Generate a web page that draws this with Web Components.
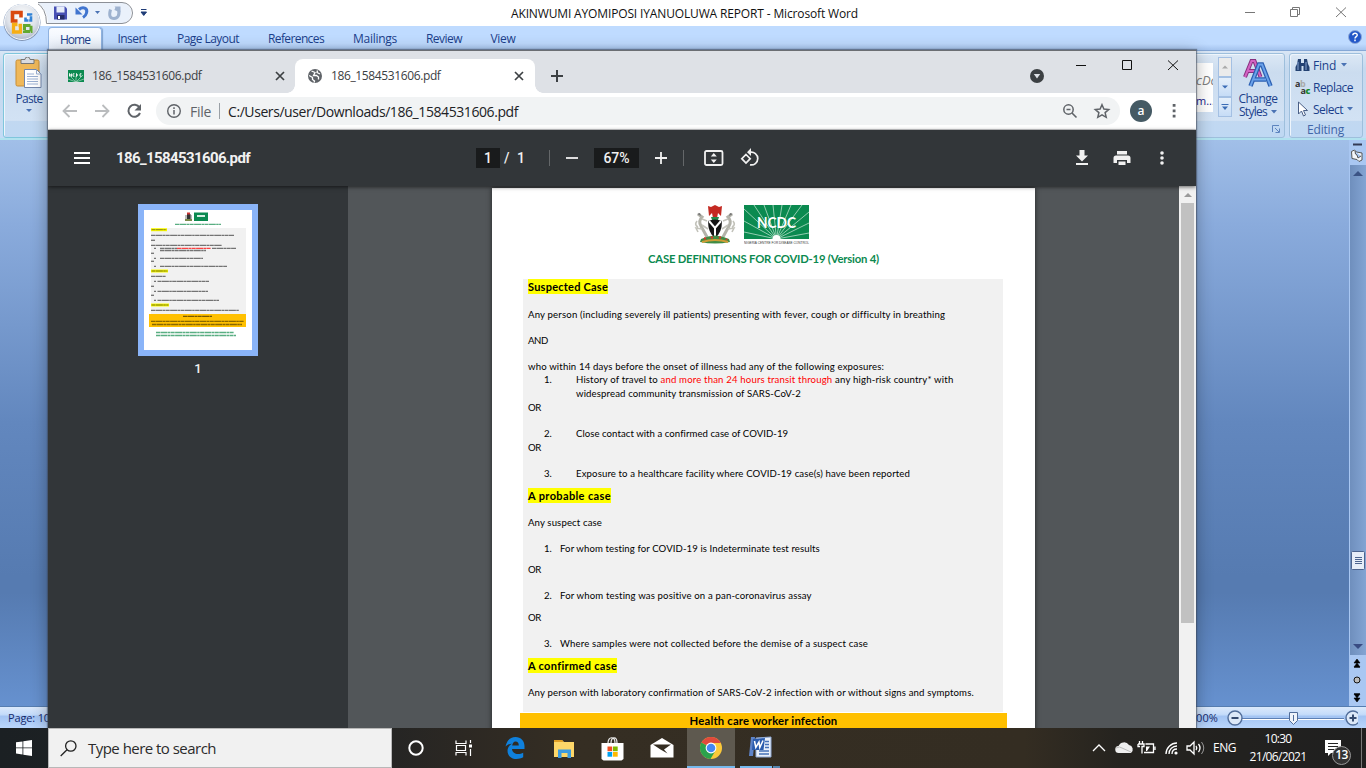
<!DOCTYPE html>
<html lang="en">
<head>
<meta charset="utf-8">
<title>Desktop</title>
<style>
html,body{margin:0;height:100%;overflow:hidden}
body{font-family:"Open Sans","Noto Sans",sans-serif}
desk-top{height:768px;width:1366px}
</style>
</head>
<body>
<desk-top></desk-top>
<script>
const svg=(w,h,body,vb)=>`<svg width="${w}" height="${h}" viewBox="${vb||`0 0 ${w} ${h}`}" style="display:block;flex:none">${body}</svg>`;
const fit=(w,text,cls='')=>`<fit-text w="${w}" class="${cls}">${text}</fit-text>`;
const define=(name,css,html)=>customElements.define(name,class extends HTMLElement{
  constructor(){super();this.attachShadow({mode:'open'}).innerHTML=`<style>*{box-sizing:border-box}${css}</style>${html}`;}
});

/* ---------- Office 2007 pieces ---------- */
define('office-button',`:host{display:block;width:40px;height:40px}`,
svg(40,40,`<defs><radialGradient id="g" cx=".5" cy=".35" r=".7"><stop offset="0" stop-color="#fff"/><stop offset=".6" stop-color="#dfe3ea"/><stop offset="1" stop-color="#a6b1c4"/></radialGradient></defs>
<circle cx="20" cy="20.500" r="18.500" fill="#7f93b3"/><circle cx="20" cy="20" r="17.500" fill="url(#g)" stroke="#f6f9fd"/>
<g fill="none"><path d="M15.500 19H10.500V10.500h8.500v5" stroke="#d9480f" stroke-width="3.600"/><path d="M23.500 15.500v3h5.500v-6h-4" stroke="#3283d6" stroke-width="2.600" stroke-dasharray="6 .7"/><path d="M15.500 22.500h-4v7.500h7v-6.500h-2" stroke="#f7ae14" stroke-width="3.300"/><path d="M22.500 23.500h6.500v6h-6.500z" stroke="#62a92f" stroke-width="3" stroke-dasharray="6 .7"/></g>`));

define('quick-access',`:host{display:flex;align-items:center}`,
svg(120,26,`<path d="M0 2.500h83a10 10 0 0 1 0 21H10q0-13-10-21z" fill="#eaf1fb"/><path d="M-2 2.500h86a10.500 10.500 0 0 1 0 21H8.500Q8.500 8-2 2.500" fill="none" stroke="#8c9097"/>
<path d="M16 6.500h11l2 2v11H16z" fill="#4750b4"/><path d="M18.500 6.500h8v6h-8z" fill="#e6ecfa"/><path d="M19 15h7.500v4.500H19z" fill="#252c68"/><path d="M20 16h2v3h-2z" fill="#fff"/>
<path d="M41 9.500c4-3.500 9-1.500 7.500 3.500-.5 2-2 3.500-3.500 4.500" fill="none" stroke="#4175cf" stroke-width="3"/><path d="M37.500 7.500v7h7z" fill="#4175cf"/>
<path d="M57 11h5l-2.500 3z" fill="#4b73b4"/>
<path d="M72.500 9.500c-2 7 0 9 3.500 9s6-3 4.500-8.500l-3.500-1.500" fill="none" stroke="#9eb2cf" stroke-width="3"/><path d="M76.500 6.500h6v6z" fill="#9eb2cf"/>
<path d="M103 9.500h5.500M103 12h5.500l-2.750 3.500z" fill="#1f3c77" stroke="#1f3c77"/>`));

define('ribbon-tab',`:host{display:flex;align-items:center;justify-content:center;height:24px;padding-top:1px;box-sizing:border-box;font-size:12px;color:#1b3f8b}:host([active]){height:23px;background:linear-gradient(#fafcff,#e9f1fb);border:1px solid #8fb2e0;border-bottom:0;border-radius:4px 4px 0 0;margin-top:1px;padding-top:0;box-shadow:1px 0 1px #7fa2d0}`,`<slot></slot>`);

define('word-titlebar',`:host{display:flex;height:26px;background:#fff}.qa{margin-left:38px;width:120px}.t{margin-left:353px;margin-top:6px;font-size:12px;line-height:16px;color:#111;white-space:nowrap}.c{margin-left:386px}`,
`<quick-access class="qa"></quick-access><div class="t">${fit(347,'AKINWUMI AYOMIPOSI IYANUOLUWA REPORT - Microsoft Word')}</div><div class="c">${svg(112,26,`<g fill="none" stroke="#777"><path d="M1 12.500h10M46.500 9.500h7v7h-7zM48.500 9.500v-2h7v7h-2M92 7.500l10 9.500M102 7.500l-10 9.500"/></g>`)}</div>`);

define('ribbon-tabs',`:host{display:flex;height:24px;background:linear-gradient(#bfdbff,#bfdbff 75%,#a5c4ee);padding-left:48px}
.h{width:54px}.e{margin-left:auto;margin-top:4px;margin-right:4px}`,
`<ribbon-tab active class="h">${fit(30,'Home')}</ribbon-tab>
<ribbon-tab style="width:60px">${fit(29,'Insert')}</ribbon-tab><ribbon-tab style="width:92px">${fit(62,'Page Layout')}</ribbon-tab><ribbon-tab style="width:84px">${fit(56,'References')}</ribbon-tab><ribbon-tab style="width:74px">${fit(44,'Mailings')}</ribbon-tab><ribbon-tab style="width:64px">${fit(36,'Review')}</ribbon-tab><ribbon-tab style="width:54px">${fit(25,'View')}</ribbon-tab>
<div class="e">${svg(14,14,`<circle cx="7" cy="7" r="6.500" fill="#2257c8" stroke="#8fa9d8"/><path d="M4.800 5.300C5 2.500 9.500 2.700 9.200 5.200 9 6.600 7 6.600 7 8.400M7 9.600v1.600" stroke="#fff" stroke-width="1.500" fill="none"/>`)}</div>`);

define('word-ribbon',`:host{display:flex;height:90px;background:linear-gradient(#d9e6f5,#c5d9ef 20%,#c6dbf2 80%,#c3dbf6);border-top:1px solid #86a8d6;border-bottom:2px solid #b1e2ef;color:#1b3f8b;font-size:12px;padding:2px 1px}
.g{flex:none;border:1px solid #9ebfdc;border-radius:3px;background:linear-gradient(#dce8f5,#cbdcef 22%,#d2e2f4 80%,#c1d8f1 81%,#bfd8f3);height:85px;box-shadow:inset 1px 1px #eef5fc}
.clip{width:120px;padding:3px 0 0 7px;margin-left:2px;border-color:#7fc6dc}.clip .p{display:flex;flex-direction:column;align-items:center;width:36px}
.st{margin-left:974px;width:188px;display:flex;padding-left:98px;position:relative}
.gal{width:17px;height:49px;margin-top:9px;background:#fff;overflow:hidden}
.col{display:flex;flex-direction:column;margin:3px 0 0 5px;width:14px}.col div{height:20px;border:1px solid #a4c0e3;background:linear-gradient(#e5effa,#c6dcf6);display:flex;align-items:center;justify-content:center}.col div:first-child{background:#ebebeb}
.cs{display:flex;flex-direction:column;align-items:center;width:40px;margin-left:6px;padding-top:4px;line-height:13px}
.r{display:flex;align-items:center;gap:4px}
.ed{width:74px;margin-left:4px;padding:0 0 0 5px}.ed .row{height:22px;display:flex;align-items:center;gap:3px}.ed .lab{height:18px;display:flex;align-items:center;justify-content:center;color:#4166a8;padding-right:6px}
.gt{font:italic 13px/18px "Open Sans",sans-serif;color:#7f7f7f;padding-top:8px;white-space:nowrap}.gb{font-size:11px;line-height:15px;color:#1a1a8c;padding-top:4px;white-space:nowrap}
.ab{width:15px;font:bold 9px/7px 'Open Sans',sans-serif;letter-spacing:-.4px;color:#333}.ab div{text-align:right}.ab i{font-style:normal;color:#aaa}.ab b{color:#168a2b}`,
`<div class="g clip"><div class="p">${svg(28,33,`<rect x="1" y="3" width="23" height="26" rx="1.500" fill="#efb85a" stroke="#c78d35"/><path d="M6 2.500h4a2.500 2.500 0 0 1 5 0h4v4H6z" fill="#d9dbe0" stroke="#777"/><path d="M9.500 12.500h12l4.500 4.500v13.500H9.500z" fill="#fff" stroke="#7286ab"/><path d="M21.500 12.500V17H26M12 17h7M12 19.500h11M12 22h11M12 24.500h11M12 27h11" fill="none" stroke="#9bb0d2"/>`)}<div style="line-height:17px">${fit(27,'Paste')}</div>${svg(6,6,`<path d="M0 2h6l-3 3z" fill="#4b73b4"/>`)}</div></div>
<div class="g st"><div class="gal"><div class="gt">cDc</div><div class="gb">m...</div></div>
<div class="col"><div>${svg(6,4,`<path d="M0 3.500h6L3 .5z" fill="#aaa"/>`)}</div><div>${svg(6,4,`<path d="M0 .5h6L3 3.500z" fill="#3b6cb5"/>`)}</div><div>${svg(8,8,`<path d="M.5 1.500h7" stroke="#3b6cb5"/><path d="M1 3.500h6L4 7z" fill="#3b6cb5"/>`)}</div></div>
<div class="cs">${svg(30,30,`<g fill="none"><path d="M2 19L8.500 3h3l6 16M5 13h9" stroke="#87307f" stroke-width="4"/><path d="M2 19L8.500 3h3l6 16M5 13h9" stroke="#d263c3" stroke-width="2"/><path d="M7.500 28L16 6.500h3L27.500 28M11 21.500h12" stroke="#2d60b2" stroke-width="4.500"/><path d="M7.500 28L16 6.500h3L27.500 28M11 21.500h12" stroke="#6aa2ea" stroke-width="2"/></g>`)}<div style="margin-top:4px;height:13px">${fit(39,'Change')}</div><div class="r">${fit(28,'Styles')}${svg(6,4,`<path d="M0 0h6L3 3.500z" fill="#4b73b4"/>`)}</div></div>
<div style="position:absolute;right:4px;bottom:4px">${svg(8,8,`<path d="M.5 7V.5H7M3 3l4 4M7.500 3.500v4h-4" fill="none" stroke="#5d84bf"/>`)}</div></div>
<div class="g ed"><div class="row">${svg(15,14,`<path d="M3 1h3v4h3V1h3l1 5 1.500 3v4h-6V8H6.500v5h-6V9L2 6z" fill="#244272"/><path d="M3 4v8M11 4v8" stroke="#89a5d2"/>`)}${fit(23,'Find')}${svg(8,4,`<path d="M2 0h6L5 3.500z" fill="#4b73b4"/>`)}</div>
<div class="row"><div class="ab">a<i>b</i><div>a<b>c</b></div></div>${fit(40,'Replace')}</div>
<div class="row">${svg(15,16,`<path d="M3.500 1v12l3-3 2 5 2-1-2-4.500h4z" fill="#fff" stroke="#4a5f86"/>`)}${fit(30,'Select')}${svg(7,4,`<path d="M1 0h6L4 3.500z" fill="#4b73b4"/>`)}</div>
<div class="lab">${fit(37,'Editing')}</div></div>`);

define('word-body',`:host{display:flex;justify-content:flex-end;height:566px;background:linear-gradient(#a1bfe8,#8aabdc 15%,#6287be 50%,#567bb1 77%,#567bb1 80%,#6691cf)}
.s{width:17px;background:#a9c7f2;display:flex;flex-direction:column;align-items:center}.tr{background:linear-gradient(90deg,#6f8fbd,#83a4d3);width:16px;height:490px;display:flex;flex-direction:column;align-items:center;padding:6px 0}`,
`<div class="s">${svg(17,25,`<path d="M4 4.500h9" stroke="#333a55" stroke-width="2"/><path d="M2.500 11.500l3-1.500 2 2 5.500 1v7l-3 1.500-2-2-5-1z M6 11q0 4 2 4l1 3 3-2" fill="#f4f6fa" stroke="#555"/>`)}<div class="tr">${svg(10,6,`<path d="M0 5h10L5 0z" fill="#3b5384"/>`)}<div style="margin-top:374px">${svg(14,19,`<rect x=".5" y=".5" width="13" height="18" rx="1" fill="#e6edf8" stroke="#4c648f"/><path d="M4 6.500h7M4 8.500h7M4 10.500h7M4 12.500h7" stroke="#4c648f"/>`)}</div><div style="margin-top:auto">${svg(10,6,`<path d="M0 1h10L5 6z" fill="#394c83"/>`)}</div></div>
${svg(17,51,`<path d="M5 8h6L8 4zM5 12h6L8 8zM5 12.500h6M5 39h6l-3 4zM5 43h6l-3 4zM5 38.500h6" fill="#000" stroke="#000" stroke-width=".6"/><circle cx="8" cy="25" r="3" fill="#bbb" stroke="#111"/>`)}</div>`);

define('word-status',`:host{display:flex;height:22px;box-sizing:border-box;background:linear-gradient(#dbe9fb,#c5dcfa 35%,#a3c4f3 45%,#b9d5fb);border-top:1px solid #567db0;font-size:11px;color:#15296b;align-items:center;padding-left:8px}`,
`${fit(42,'Page: 10')}<div style="margin-left:1146px">${fit(22,'00%')}</div>${svg(140,20,`<path d="M24 10.500h102" stroke="#5c7fb4"/><path d="M24 11.500h102" stroke="#fff"/><g fill="#dce8f8" stroke="#516d9a" stroke-width="1.400"><circle cx="17" cy="10" r="7"/><circle cx="135" cy="10" r="7"/></g><path d="M13.500 10h7M131.500 10h7M135 6.500v7" stroke="#34496e" stroke-width="2"/><path d="M71.500 4.500h8v8l-4 4-4-4z" fill="#eef3fa" stroke="#516d9a"/><path d="M75.500 7v6" stroke="#516d9a"/>`)}`);

define('word-window',`:host{display:flex;flex-direction:column;width:1366px;height:728px;position:relative}office-button{position:absolute;left:2px;top:2px}`,
`<word-titlebar></word-titlebar><ribbon-tabs></ribbon-tabs><word-ribbon></word-ribbon><word-body></word-body><word-status></word-status><office-button></office-button>`);

/* ---------- browser ---------- */
const sunburst=`<path d="M0 0h65v34H0z" fill="#0b8a50"/><path d="M32.500 34L0 27M32.500 34L0 16M32.500 34L0 4M32.500 34L10 0M32.500 34L20 0M32.500 34L29 0M32.500 34L38 0M32.500 34L47 0M32.500 34L58 0M32.500 34L65 7M32.500 34L65 18M32.500 34L65 28" stroke="#b5ddc8" stroke-width=".8"/><circle cx="32.500" cy="34" r="4" fill="#fff"/>`;

define('browser-tab',`:host{display:flex;align-items:center;height:34px;width:240px;box-sizing:border-box;font-size:12px;color:#3c4043;padding:0 10px 0 12px;position:relative}:host([active]){background:#fff;border-radius:8px 8px 0 0}
:host([active])::before,:host([active])::after{content:"";position:absolute;bottom:0;width:8px;height:8px;left:-8px;background:radial-gradient(circle at 0 0,transparent 7.5px,#fff 8px)}:host([active])::after{left:auto;right:-8px;background:radial-gradient(circle at 100% 0,transparent 7.5px,#fff 8px)}
.x{margin-left:auto}.n{margin-left:8px;padding-bottom:1px}`,
`<slot name="icon"></slot><div class="n">${fit(109.5,'186_1584531606.pdf')}</div><div class="x">${svg(12,12,`<path d="M2 2l8 8M10 2l-8 8" stroke="#3c4043" stroke-width="1.700"/>`)}</div>`);

define('tab-strip',`:host{display:flex;height:43px;box-sizing:border-box;background:#dee1e6;border-top:1px solid #6b6e73;padding:8px 0 0 8px}`,
`<browser-tab><div slot="icon">${svg(16,12,`<path d="M0 0h16v12H0z" fill="#0b8a50"/><path d="M8 12L0 9M8 12L1 5M8 12l7-7M8 12l8-3M8 12V6" stroke="#a5d5bd" stroke-width=".7"/><path d="M1.500 6.500v-3l2 3v-3M6.500 3.800H5v2.400h1.500M8.500 3.500v3q2-1.500 0-3M13.500 3.800H12v2.400h1.500" fill="none" stroke="#fff" stroke-width=".9"/>`)}</div></browser-tab><browser-tab active style="margin-left:-1px"><div slot="icon">${svg(16,16,`<circle cx="8" cy="8" r="7" fill="#5f6368"/><path d="M2.200 7.500l3.300 2v2l2 1.500-.5 1.500M4.500 3L8 4.500 6.500 7.500h3l2 1.500v2.500M10.500 2.500l-.5 2 3 1.500" stroke="#fff" stroke-width="1.300" fill="none"/>`)}</div></browser-tab>
<div style="margin:11px 0 0 16px">${svg(12,12,`<path d="M6 0v12M0 6h12" stroke="#3c4043" stroke-width="2"/>`)}</div>
<div style="margin-left:466px">${svg(160,34,`<circle cx="8" cy="17" r="7" fill="#3c4043"/><path d="M4.800 15h6.400L8 19.500z" fill="#dee1e6"/><path d="M47 6.500h10M93.500 1.500h9v9h-9zM139 1.500l10 9.500M149 1.500l-10 9.500" fill="none" stroke="#111"/>`)}</div>`);

define('address-bar',`:host{display:flex;align-items:center;height:37px;box-sizing:border-box;background:#fff;border-bottom:1px solid #cfd0d2;padding-left:12px}
.o{display:flex;align-items:center;width:964px;height:28px;border-radius:14px;background:#f1f3f4;margin-left:12px;padding-left:10px;font-size:14px;color:#202124}.f{color:#5f6368;margin-left:8px}.l{width:1px;height:16px;background:#9aa0a6;margin:0 8px 0 8px}
.i{margin-left:auto;margin-right:9px;display:flex;gap:15px}.a{width:22px;height:22px;border-radius:50%;background:#455a64;color:#fff;font:600 12px/21px "Open Sans",sans-serif;text-align:center;margin:0 20px 0 10px}`,
`${svg(84,20,`<g fill="none" stroke-width="1.800"><path d="M17 10H4M9.500 4l-6 6 6 6M35 10h13M42.500 4l6 6-6 6" stroke="#babcbe"/><path d="M79.500 6.500A6 6 0 1 0 80 12" stroke="#5f6368" stroke-width="2"/></g><path d="M81 3v6.500h-6.500z" fill="#5f6368"/>`)}
<div class="o">${svg(16,16,`<circle cx="8" cy="8" r="6.300" fill="none" stroke="#5f6368" stroke-width="1.400"/><path d="M8 7v4.500M8 4.300V6" stroke="#5f6368" stroke-width="1.500"/>`)}<div class="f">${fit(21,'File')}</div><div class="l"></div>${fit(290,'C:/Users/user/Downloads/186_1584531606.pdf')}
<div class="i">${svg(16,16,`<circle cx="6.500" cy="6.500" r="4.700" fill="none" stroke="#5f6368" stroke-width="1.500"/><path d="M10 10l4.500 4.500M4.500 6.500h4" stroke="#5f6368" stroke-width="1.600"/>`)}${svg(18,16,`<path d="M9 1.700l1.900 4.400 4.800.4-3.600 3.100 1.100 4.700L9 11.800l-4.200 2.500 1.100-4.700-3.600-3.100 4.800-.4z" fill="none" stroke="#5f6368" stroke-width="1.500"/>`)}</div></div>
<div class="a">a</div>${svg(4,16,`<path d="M.7 1h2.800v2.800H.7zM.7 6.400h2.800v2.800H.7zM.7 11.800h2.800v2.800H.7z" fill="#5f6368"/>`)}`);

define('pdf-toolbar',`:host{display:flex;align-items:center;height:56px;box-sizing:border-box;background:#323639;color:#f1f1f1;font:500 14px Roboto,sans-serif;padding-left:26px;box-shadow:0 1px 4px rgba(0,0,0,.6);position:relative;z-index:1}
.b{background:#191b1c;height:20px;line-height:21px;text-align:center}.s{width:1px;height:16px;background:#646769}`,
`${svg(16,12,`<path d="M0 1h16M0 6h16M0 11h16" stroke="#fff" stroke-width="2"/>`)}<div style="margin-left:26px;font-weight:700;font-size:15px">${fit(134,'186_1584531606.pdf')}</div>
<div class="b" style="margin-left:226px;width:24px">1</div><div style="margin-left:4px;width:45px;word-spacing:4px">/ 1</div><div class="s"></div>
<div style="margin-left:16px">${svg(12,12,`<path d="M0 6h12" stroke="#f1f1f1" stroke-width="1.800"/>`)}</div><div class="b" style="margin-left:16px;width:45px">67%</div><div style="margin-left:16px">${svg(12,12,`<path d="M0 6h12M6 0v12" stroke="#f1f1f1" stroke-width="1.800"/>`)}</div><div class="s" style="margin-left:16px"></div>
<div style="margin-left:20px">${svg(20,16,`<rect x="1" y="1" width="17.500" height="14" rx="1.500" fill="none" stroke="#f1f1f1" stroke-width="1.800"/><path d="M6.800 6.500h6L9.800 3zM6.800 9.500h6l-3 3.500z" fill="#f1f1f1"/>`)}</div>
<div style="margin-left:16px">${svg(20,20,`<path d="M6 6.500l4.200 4.200L6 15l-4.200-4.300z M10 4.300A6.400 6.400 0 1 1 10 16.800" fill="none" stroke="#f1f1f1" stroke-width="1.700"/><path d="M11 0v8L7 4.200z" fill="#f1f1f1"/>`)}</div>
<div style="margin-left:311px">${svg(100,20,`<path d="M8.500 2h5v5.500H17L11 13.500 5 7.500h3.500zM5 15h12v2H5z" fill="#f1f1f1"/><path d="M46 3h10v3.500H46zM45 7.500h12a2.500 2.500 0 0 1 2.500 2.500v5H56v-3H46v3h-3.500v-5A2.500 2.500 0 0 1 45 7.500zM47.500 13.500h7V17h-7z" fill="#f1f1f1"/><g fill="#f1f1f1"><circle cx="91" cy="5" r="1.800"/><circle cx="91" cy="10" r="1.800"/><circle cx="91" cy="15" r="1.800"/></g>`)}</div>`);

const tl=(y,a,b,c='#444')=>`<path d="M${a} ${y}H${b}" stroke="${c}" stroke-width="1.300" stroke-dasharray="4 .4 7 .4 2.500 .4" opacity=".72"/>`;
const yl=(y,b)=>`<path d="M7 ${y-1.5}H${b}v3H7z" fill="#ff0"/>`+tl(y,7.5,b-.5,'#771');
define('page-thumb',`:host{display:flex;flex-direction:column;align-items:center;width:120px;color:#f1f1f1;font:500 13px Roboto,sans-serif}.p{border:6px solid #8ab4f8;background:#fff}.n{margin-top:5px;line-height:16px}`,
`<div class="p">${svg(108,140,`<path d="M7 18h95v86H7z" fill="#f1f1f1"/><path d="M5 104h97v13H5z" fill="#ffc000"/><path d="M41 5h2v5h-2zM46 5h2v5h-2z" fill="#bbb"/><path d="M43 4h3.500v5H43z" fill="#333"/><path d="M43 2.500h3v2h-3z" fill="#c33"/><path d="M41 9h7v2h-7z" fill="#7a8a4a"/><path d="M50 2.500h14v8.500H50z" fill="#0b8a50"/><path d="M53 6h8" stroke="#d5eee1" stroke-width="2"/>
${tl(14.3,31,77,'#1a9053')}${yl(19.7,23)}${tl(25.3,7,90)}${tl(30.3,7,11)}${tl(35.3,7,78)}${tl(38.3,10,12)}${tl(38.3,16,33)}${tl(38.3,33,67,'#f00')}${tl(38.3,68,92)}${tl(40.5,16,62)}${tl(43.3,7,10)}${tl(48.3,10,12)}${tl(48.3,16,59)}${tl(51.3,7,10)}${tl(56.3,10,12)}${tl(56.3,16,83)}${yl(61,24)}${tl(66.3,7,22)}${tl(71.3,10,12)}${tl(71.3,13.5,65)}${tl(76.3,7,10)}${tl(81.3,10,12)}${tl(81.3,13.5,64)}${tl(85.3,7,10)}${tl(90.3,10,12)}${tl(90.3,13.5,75)}${yl(95,25)}${tl(100.3,7,95)}${tl(106.3,39,68,'#432f00')}${tl(111.3,7,100,'#5d4600')}${tl(114.5,8,98,'#5d4600')}${tl(122.5,12,90,'#1a9053')}${tl(125.5,12,92,'#1a9053')}`)}</div><div class="n">1</div>`);

define('coat-of-arms',`:host{display:block}`,svg(42,42,`<g fill="none" stroke="#b3b3aa" stroke-width="3"><path d="M13 33L7 22q-3-5 1-9l-4-3"/><path d="M35 10l-4 3q4 4 1 9l-6 11" transform="translate(3)"/></g><g fill="none" stroke="#c3c3bb" stroke-width="1.600"><path d="M8 15l5 2M8 21l6 4M8 25l-6-1 2 4M34 15l-5 2M34 21l-6 4M34 25l6-1-2 4M3 17q-3 4 1 6M39 17q3 4-1 6"/></g><path d="M7 12l-4-2 3-1zM35 12l4-2-3-1z" fill="#777"/>
<path d="M21 1l4 2 3-1-1 10-3-3-1 5h-4l-1-5-3 3-1-10 3 1z" fill="#c42a22"/><path d="M17 13h8l-1 3h-6z" fill="#238a4b"/><path d="M14 17q7-3 14 0 0 12-7 17-7-5-7-17z" fill="#151515"/><path d="M15 17l6 7 6-7M21 24v9" fill="none" stroke="#fff" stroke-width="2"/>
<path d="M7 35q14-7 28 0l1 3q-15 3-30 0z" fill="#3f8c44"/><path d="M10 34l2 1M17 33l2 1M25 34l2-1M32 35l1 1" stroke="#d43b2b" stroke-width="2"/><path d="M8 38q13-4 26 0" fill="none" stroke="#cf9d35" stroke-width="2"/>`));

define('ncdc-logo',`:host{display:block}`,svg(66,44,sunburst+`<text x="13" y="22.500" textLength="39" lengthAdjust="spacingAndGlyphs" font-size="15" font-weight="bold" fill="#fff" font-family="Lato">NCDC</text><text x="0" y="39" textLength="65" lengthAdjust="spacingAndGlyphs" font-size="4" fill="#333" font-family="Liberation Sans">NIGERIA CENTRE FOR DISEASE CONTROL</text>`));

define('pdf-line',`:host{display:flex;align-items:center;height:13px;box-sizing:border-box;font-size:9.6px;line-height:13px;color:#000;white-space:pre;padding-left:5px}:host([head]){font-weight:700;font-size:11px}:host([head]) span{background:#ff0;line-height:15px;height:15px;display:block}:host([num]){padding-left:21px}.n{width:32px}:host([num=near]) .n{width:16px}:host(:not([num])) .n{display:none}:host([cont]){padding-left:53px}`,
`<div class="n"><slot name="n"></slot></div><span><slot></slot></span>`);
const ln=(gap,w,t,attr='',n='')=>`<pdf-line style="margin-top:${gap}px" ${attr}>${n?`<b slot="n" style="font-weight:400">${n}.</b>`:''}${fit(w,t)}</pdf-line>`;
define('pdf-page',`:host{display:block;width:543px;background:#fff;font-family:Lato,sans-serif;padding-top:16px;box-shadow:0 0 5px rgba(0,0,0,.6)}
.l{display:flex;padding-left:202px;height:46px}.l ncdc-logo{margin:1px 0 0 8px}.t{color:#0b8a50;font-weight:700;font-size:11.3px;line-height:14px;margin-left:156px;margin-top:2px}.g{background:#f1f1f1;margin:13px 32px 0 31px;height:433px;padding-top:1px}.h{background:#ffc000;margin:1px 28px 0;height:30px;text-align:center;font-weight:700;font-size:11.3px;line-height:16px}`,
`<div class="l"><coat-of-arms></coat-of-arms><ncdc-logo></ncdc-logo></div><div class="t">${fit(231,'CASE DEFINITIONS FOR COVID-19 (Version 4)')}</div>
<div class="g">${ln(0,80,'Suspected Case','head')}${ln(15,417,'Any person (including severely ill patients) presenting with fever, cough or difficulty in breathing')}${ln(13,20,'AND')}${ln(13,356,'who within 14 days before the onset of illness had any of the following exposures:')}
<pdf-line num><b slot="n" style="font-weight:400">1.</b>${fit(84.5,'History of travel to ')}<span style="color:#f00">${fit(174.5,'and more than 24 hours transit through ')}</span>${fit(118.5,'any high-risk country* with')}</pdf-line>
${ln(1,225,'widespread community transmission of SARS-CoV-2','cont')}${ln(1,13,'OR')}${ln(13,212,'Close contact with a confirmed case of COVID-19','num',2)}${ln(1,13,'OR')}${ln(13,334,'Exposure to a healthcare facility where COVID-19 case(s) have been reported','num',3)}
${ln(9,83,'A probable case','head')}${ln(14,74,'Any suspect case')}${ln(13,260,'For whom testing for COVID-19 is Indeterminate test results','num=near',1)}${ln(8,13,'OR')}${ln(13,252,'For whom testing was positive on a pan-coronavirus assay','num=near',2)}${ln(9,13,'OR')}${ln(13,308,'Where samples were not collected before the demise of a suspect case','num=near',3)}
${ln(9,89,'A confirmed case','head')}${ln(14,446,'Any person with laboratory confirmation of SARS-CoV-2 infection with or without signs and symptoms.')}</div>
<div class="h">${fit(148,'Health care worker infection')}</div>`);

define('pdf-viewer',`:host{display:flex;flex:1;min-height:0;background:#525659;overflow:hidden}.side{width:300px;background:#323639;padding:18px 0 0 90px}.main{flex:1;padding:2px 0 0 144px}.bar{width:17px;background:#f1f1f1;display:flex;flex-direction:column;align-items:center;padding-top:5px}.th{width:13px;height:420px;background:#c1c1c1;margin-top:5px}`,
`<div class="side"><page-thumb></page-thumb></div><div class="main"><pdf-page></pdf-page></div><div class="bar">${svg(8,7,`<path d="M0 6h8L4 2z" fill="#9a9a9a"/>`)}<div class="th"></div></div>`);

define('browser-window',`:host{display:flex;flex-direction:column;width:1148px;height:678px;overflow:hidden;box-shadow:0 0 1px 1px rgba(60,70,85,.55),0 3px 16px rgba(0,0,0,.33)}`,
`<tab-strip></tab-strip><address-bar></address-bar><pdf-toolbar></pdf-toolbar><pdf-viewer></pdf-viewer>`);

/* ---------- taskbar ---------- */
define('task-button',`:host{display:flex;align-items:center;justify-content:center;width:49px;height:40px;box-sizing:border-box;flex:none}:host([on]){background:#5e594f;border-bottom:2px solid #76b9ed}`,`<slot></slot>`);
define('task-bar',`:host{display:flex;width:1366px;height:40px;background:linear-gradient(90deg,#1b2023,#232424 27%,#2c2823 34%,#352e23 42%,#342d22 75%,#25231f 82%,#1f1f1f);color:#fff;font-size:12px}
.q{display:flex;flex:none;align-items:center;width:344px;background:#f1f1f1;border:1px solid #b8b8b8;color:#2b2b2b;font-size:15px;padding-left:11px;gap:11px}.tray{margin-left:auto;display:flex;align-items:center}.ck{width:74px;text-align:center;line-height:18px;display:flex;flex-direction:column;align-items:center;margin-left:5px}.no{position:relative;width:36px;height:40px}.bd{position:absolute;left:7px;top:18px;width:19px;height:19px;border-radius:50%;background:#333;border:1px solid #999;font:600 12px/16px "Open Sans",sans-serif;text-align:center;letter-spacing:-.7px}`,
`<task-button style="width:48px">${svg(16,16,`<path d="M0 2.300l6.500-.9v6.100H0zM7.300 1.300L16 0v7.500H7.300zM0 8.300h6.500v6.200L0 13.600zM7.300 8.300H16V16l-8.700-1.300z" fill="#fff"/>`)}</task-button>
<div class="q">${svg(17,17,`<circle cx="10.800" cy="6" r="5.200" fill="none" stroke="#222" stroke-width="1.300"/><path d="M7 9.800L.7 16" stroke="#222" stroke-width="1.300"/>`)}${fit(128,'Type here to search')}</div>
<task-button style="width:48px">${svg(16,16,`<circle cx="8" cy="8" r="6.700" fill="none" stroke="#fff" stroke-width="2"/>`)}</task-button>
<task-button style="width:48px">${svg(18,16,`<path d="M1 .5v3h10v-3M1.500 5.500h9v5h-9zM1 15.500v-3h10v3M15.500 0v3M15.500 9v7" fill="none" stroke="#fff" stroke-width="1.200"/><path d="M14 4.500h3v3h-3z" fill="#fff"/>`)}</task-button>
<task-button style="width:54px">${svg(20,22,`<path d="M.5 9.500C2 3 5.500 0 10.500 0 16 0 19.500 4 19.500 9v3H7c.3 3.500 3 5 6 5 2 0 3.800-.5 5.200-1.300v4.600C16 21.500 14 22 11.500 22 6 22 2.500 18.500 2.500 13.800c0-3.300 2-5.800 4.500-7C4.500 6.800 2 7.800.5 9.500zM7.200 8.600h6.600c0-2.500-1.200-4-3.200-4S7.500 6.300 7.200 8.600z" fill="#0f80dc"/>`)}</task-button>
<task-button style="width:44px">${svg(22,19,`<path d="M1 1h8l2 2h10v15H1z" fill="#fdd769"/><path d="M1 1h8l1.500 2H1z" fill="#e1a026"/><path d="M5 10.500h13V19h-3.500v-5h-6v5H5z" fill="#3b9be0"/>`)}</task-button>
<task-button style="width:53px">${svg(23,25,`<path d="M7 7c0-7 7-7 7 0M10 7c0-7 6-7 6 0" stroke="#eee" fill="none" stroke-width="1.200"/><path d="M.5 7h22v16l-2 1.500h-18L.5 23z" fill="#fff"/><path d="M6.500 10.500h4.700v4.700H6.500z" fill="#f04e23"/><path d="M12 10.500h4.700v4.700H12z" fill="#7fba00"/><path d="M6.500 16h4.700v4.700H6.500z" fill="#00a1f1"/><path d="M12 16h4.700v4.700H12z" fill="#ffb900"/>`)}</task-button>
<task-button style="width:46px">${svg(24,20,`<path d="M.5 7L12 0l11.500 7v12.500H.5z" fill="#fff"/><path d="M3 6.500h18l-7 5 3.500 4-7-4z" fill="#342d22"/>`)}</task-button>
<task-button on style="width:48px;margin-left:2px">${svg(24,24,`<circle cx="12" cy="13" r="11" fill="#fbc93a"/><path d="M12 13L2.400 7.500A11 11 0 0 1 21.600 7.600L22 8H12z" fill="#e04a3c"/><path d="M12 13l-9.600-5.500A11 11 0 0 0 11.500 24l4.700-8z" fill="#2ba24c"/><circle cx="12" cy="13" r="5.400" fill="#fff"/><circle cx="12" cy="13" r="4.300" fill="#4587f3"/>`)}</task-button>
<task-button style="margin-left:5px;width:40px;border-bottom:2px solid #76b9ed;border-image:linear-gradient(90deg,#76b9ed 78%,#342d22 78%,#342d22 80%,#5585ad 80%) 2">${svg(24,24,`<path d="M8 3l15-1v20H8z" fill="#e9f0fb" stroke="#8fa8d2"/><path d="M17 6.500h4M17 9.500h4M17 12.500h4M11 16h10M11 19h10" stroke="#4571b8" stroke-width="1.600"/><path d="M3 2h4L5 21H1z" fill="#5e83c7"/><path d="M5 4l12-1-1.500 12H4z" fill="#2b5cad"/><path d="M6.500 6l1.300 6.500L11 7l.8 5.500L15 5.500" fill="none" stroke="#fff" stroke-width="1.500"/>`)}</task-button>
<div class="tray">${svg(116,24,`<g fill="none" stroke="#fff" stroke-width="1.300"><path d="M3 15l6-6 6 6"/><path d="M55.500 8h8v8.500H54M65 10.500v3.500M49.500 5v3M52.500 5v3M48 8h6v2.500h-2v7M48 8v2.500h2"/><path d="M76 18c0-6 5-11 11-11M79 18c0-4.500 3.500-8 8-8M82 18c0-3 2-5 5-5"/><path d="M97 10h3l4-4v12l-4-4h-3z"/><path d="M106 10q1.500 2 0 4M108.500 8q3 4 0 8"/></g><path d="M111.500 6q4.500 6 0 12" fill="none" stroke="#999"/><path d="M56 10.500h4l-3 4.500h-1z" fill="#fff"/><circle cx="86" cy="17" r="1.600" fill="#fff"/><path d="M29 17a3.500 3.500 0 0 1-.5-7A6 6 0 0 1 39 9a4.500 4.500 0 0 1 2 8z" fill="#eee"/><path d="M26 12q4-2 6 0l9 4" fill="none" stroke="#bbb"/>`)}<div style="margin-left:7px;padding-bottom:1px">${fit(23,'ENG')}</div>
<div class="ck">${fit(27,'10:30')}${fit(57,'21/06/2021')}</div><div class="no" style="margin-left:10px">${svg(20,34,`<path d="M0 12h16v13H6l-3 3v-3H0z" fill="#fff"/><path d="M3 15.500h10M3 18.500h10M3 21.500h6" stroke="#252525" stroke-width="1.200"/>`)}<div class="bd">13</div></div><div style="width:1px;height:40px;background:#777;margin-right:4px"></div></div>`);

define('desk-top',`:host{display:flex;flex-direction:column;position:relative;overflow:hidden}browser-window{position:absolute;left:48px;top:50px}task-bar{position:relative}`,
`<word-window></word-window><browser-window></browser-window><task-bar></task-bar>`);

/* Spreads its text over the width given in "w" by adjusting the letter spacing. */
customElements.define('fit-text',class extends HTMLElement{
  constructor(){super();this.attachShadow({mode:'open'}).innerHTML='<style>:host{display:inline-block;white-space:pre}span{display:inline-block}</style><span><slot></slot></span>';}
  connectedCallback(){
    const s=this.shadowRoot.querySelector('span'),w=+this.getAttribute('w');
    const now=s.getBoundingClientRect().width;
    if(now)s.style.letterSpacing=(w-now)/this.textContent.length+'px';
    this.style.width=w+'px';
  }
});
</script>
</body>
</html>
